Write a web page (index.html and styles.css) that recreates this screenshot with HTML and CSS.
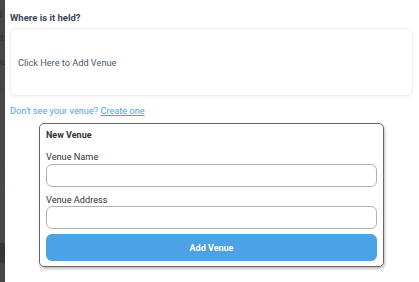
FILE: index.html
```html
<!DOCTYPE html>
<html>
<head>
    <title>Where is it held?</title>
    <link rel="stylesheet" href="styles.css">
</head>
<body>
    <div class="page">
        <div class="behind">
            <span class="frag f1">t</span>
            <span class="frag f2">ut</span>
            <span class="frag f3">nc</span>
            <span class="frag f4 blue">s</span>
            <span class="frag f5 blue">n</span>
            <span class="frag f6 orange">al</span>
            <div class="band"></div>
        </div>
        <div class="main">
            <div class="section-title">Where is it held?</div>
            <div class="venue-pick">Click Here to Add Venue</div>
            <div class="hint">Don't see your venue? <a href="#" class="create">Create one</a></div>

            <div class="new-venue">
                <div class="nv-title">New Venue</div>
                <label class="field-label">Venue Name</label>
                <input type="text" class="field">
                <label class="field-label second">Venue Address</label>
                <input type="text" class="field">
                <button class="add-btn">Add Venue</button>
            </div>
        </div>
    </div>
</body>
</html>
```

FILE: styles.css
```css
html, body {
    margin: 0;
    padding: 0;
    background: #fff;
    font-family: Roboto, "Liberation Sans", Arial, sans-serif;
    overflow: hidden;
}
.page {
    display: flex;
    height: 282px;
}
.behind {
    width: 5px;
    flex-shrink: 0;
    background: #474747;
    position: relative;
    overflow: hidden;
}
.frag {
    position: absolute;
    left: -4px;
    font-size: 9px;
    color: #2a2f3a;
    line-height: 10px;
    white-space: nowrap;
}
.frag.blue { color: #1f4a6e; }
.frag.orange { color: #6a4426; }
.f1 { top: 9px; left: -1px; }
.f2 { top: 33px; }
.f3 { top: 57px; }
.f4 { top: 84px; left: -2px; }
.f5 { top: 158px; left: -2px; }
.f6 { top: 182px; }
.band {
    position: absolute;
    left: 0;
    right: 0;
    top: 243px;
    height: 20px;
    background: #363636;
}
.main {
    flex: 1;
    padding: 0 6px 0 5px;
}
.section-title {
    margin-top: 12px;
    font-size: 9.5px;
    font-weight: bold;
    color: #3b4759;
    line-height: 12px;
}
.venue-pick {
    margin-top: 4px;
    height: 68px;
    box-sizing: border-box;
    border: 1px solid #eef0f3;
    border-radius: 6px;
    box-shadow: 0 1px 3px rgba(0, 0, 0, 0.06);
    display: flex;
    align-items: center;
    padding-left: 7px;
    font-size: 9.2px;
    color: #4a5670;
}
.hint {
    margin-top: 9px;
    font-size: 9.2px;
    color: #4ba3e6;
    line-height: 11px;
}
.create {
    color: #4ba3e6;
    text-decoration: underline;
}
.new-venue {
    width: 345px;
    margin: 7px auto 0;
    box-sizing: border-box;
    border: 1px solid #666;
    border-radius: 5px;
    box-shadow: 1px 2px 3px rgba(0, 0, 0, 0.25);
    padding: 5px 6px 5px;
    display: flex;
    flex-direction: column;
}
.nv-title {
    font-size: 9px;
    font-weight: bold;
    color: #333;
    line-height: 12px;
}
.field-label {
    margin-top: 10px;
    font-size: 9.2px;
    color: #333;
    line-height: 11px;
}
.field-label.second {
    margin-top: 7px;
}
.field {
    margin-top: 1.5px;
    height: 23px;
    box-sizing: border-box;
    border: 1px solid #b0b0b0;
    border-radius: 6px;
    outline: none;
}
.add-btn {
    margin-top: 5px;
    height: 27px;
    border: none;
    border-radius: 6px;
    background: #4ba3e6;
    color: #fff;
    font-family: Roboto, "Liberation Sans", Arial, sans-serif;
    font-size: 9px;
    font-weight: bold;
}
```
